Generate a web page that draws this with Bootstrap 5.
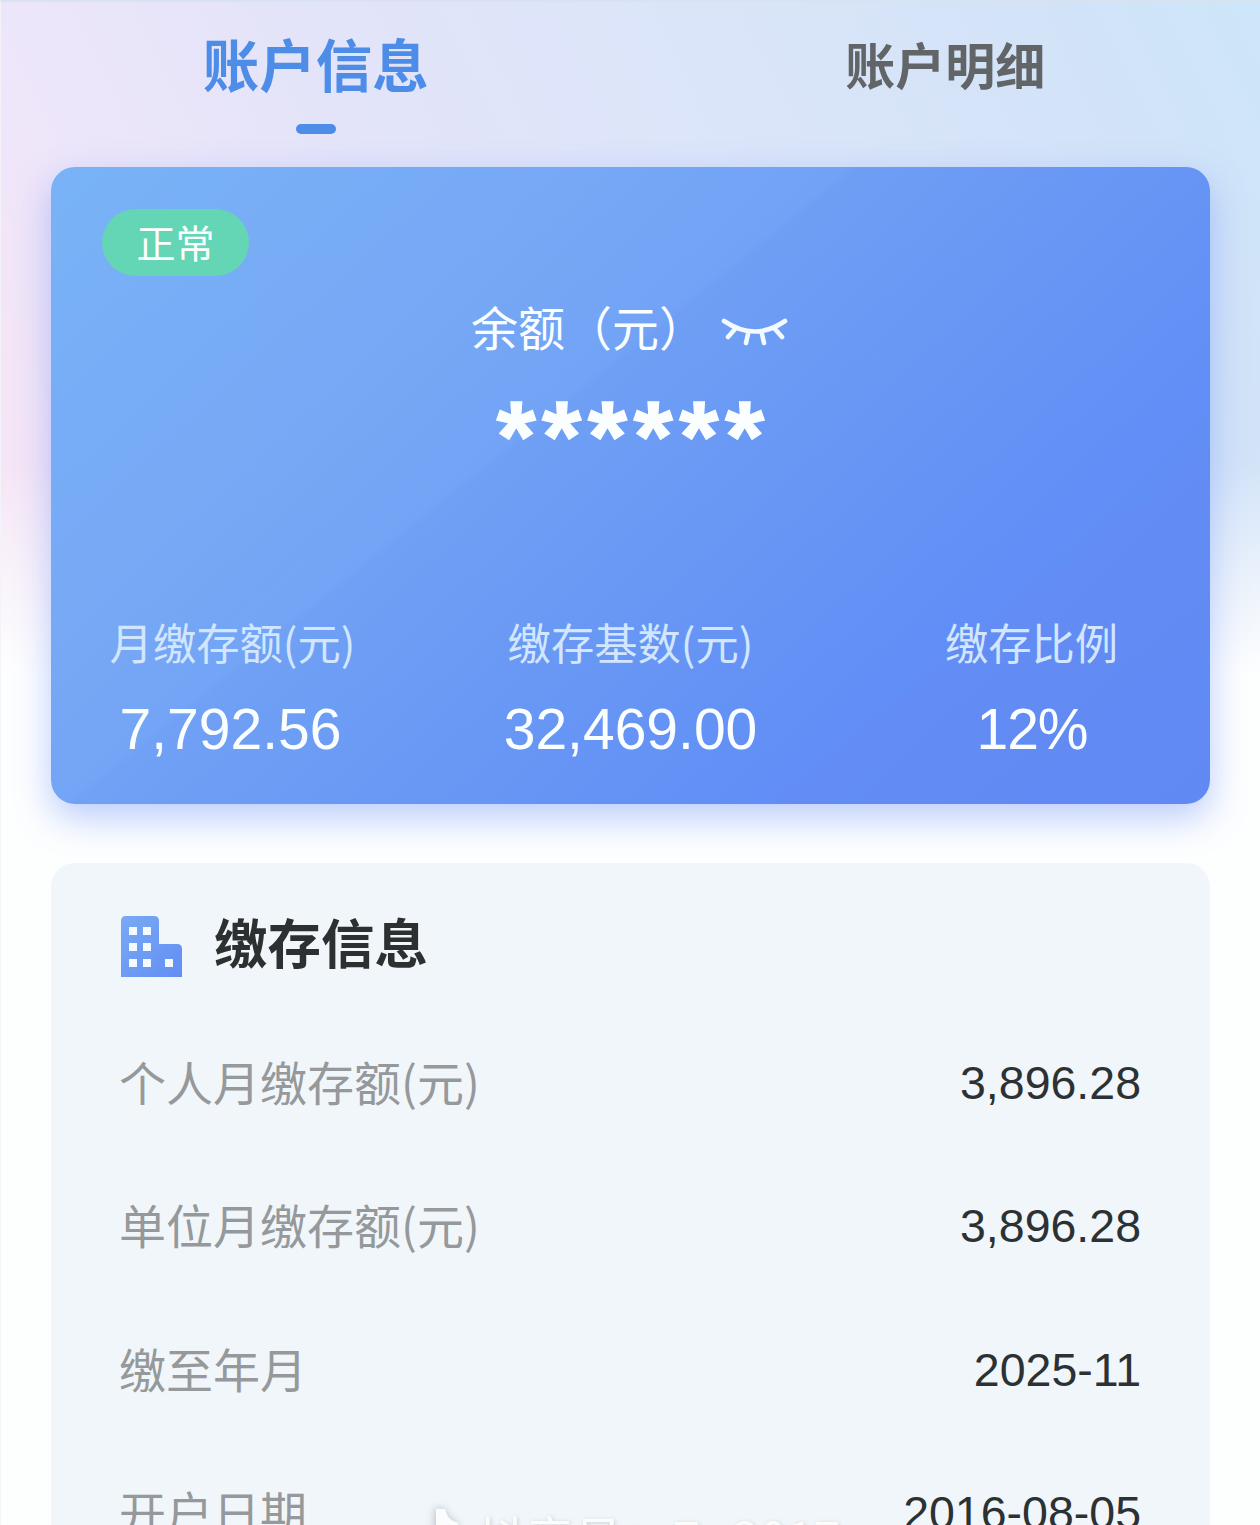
<!DOCTYPE html>
<html lang="zh-CN">
<head>
<meta charset="utf-8">
<meta name="viewport" content="width=device-width, initial-scale=1">
<title>账户信息</title>
<link href="https://cdn.jsdelivr.net/npm/bootstrap@5.3.0/dist/css/bootstrap.min.css" rel="stylesheet">
<style>
  body { font-family: "Liberation Sans", "Noto Sans CJK SC", sans-serif; background: #fdfefe; }
  .screen {
    height: 1525px; border-top: 2px solid #d9e2f0; border-left: 1px solid #f3f3f9;
    background:
      linear-gradient(180deg, rgba(253,254,254,0) 0, rgba(253,254,254,0) 460px, #fdfefe 670px),
      linear-gradient(64deg, #f5e5f6 500px, #ede6fa 667px, #e4e4f9 900px, #dce5f9 1230px, #d2e3f8 1620px, #cde6f9 1800px);
  }
  .tabs { height: 165px; }
  .tab-item { font-weight: 700; font-size: 50px; line-height: 60px; color: #626567; padding-top: 36px; }
  .tab-item.active { font-size: 56.5px; color: #4d8de8; }
  .tab-bar { width: 40px; height: 10px; border-radius: 5px; background: #4d8de8; margin-top: 26px; }
  .panel { margin-left: 50px; width: 1159px; border-radius: 24px; }
  .balance {
    height: 637px; padding-top: 42px; color: #fbfeff;
    background:
      linear-gradient(141deg, transparent 77.3%, rgba(115,125,230,.1) 77.5%, rgba(105,125,235,.1) 100%),
      linear-gradient(141deg, rgba(125,175,250,.05) 0, rgba(130,180,250,.16) 41%, transparent 41.6%),
      linear-gradient(137deg, #79b3f6 0, #75a7f5 28%, #6b9bf4 50%, #618ff6 74%, #5f8bf4 100%);
    box-shadow: 0 14px 36px rgba(95,135,250,.42);
  }
  .status { width: 147px; height: 67px; margin-left: 51px; background: #64d5b5; font-size: 39px; line-height: 71px; }
  .caption { font-size: 47px; line-height: 60px; margin-top: 24px; }
  .caption svg { margin: 4px 1px 0 15px; }
  .masked { font-size: 101px; font-weight: 700; line-height: 100px; height: 100px; margin-top: 26px; letter-spacing: 6.4px; padding-left: 6px; -webkit-text-stroke: 1.3px #fbfeff; }
  .figures { margin-top: 125px; }
  .fig-side { width: 363px; }
  .fig-last { padding-left: 6px; }
  .fig-label { font-family: "Noto Sans CJK SC", sans-serif; font-size: 43.3px; line-height: 60px; color: #d2e6ff; }
  .fig-value { font-size: 57px; line-height: 70px; margin-top: 23px; margin-left: -4px; }
  .fig-last .fig-value { margin-left: 1px; letter-spacing: -1px; }
  .details { height: 760px; margin-top: 59px; padding: 50px 69px 0 68px; background: #f1f6fa; }
  .details h2 { font-size: 53.5px; font-weight: 700; line-height: 66px; color: #2c3031; margin-left: 31px; }
  .details dl { margin-top: 33px; }
  .line-item { height: 143.5px; font-size: 47px; }
  .line-item dt { font-family: "Noto Sans CJK SC", sans-serif; font-weight: 400; color: #95999b; padding-bottom: 6px; }
  .line-item dd { color: #2c3133; font-size: 46.5px; }
  .watermark { left: 427px; top: 1505px; color: #fbfdfd; font: 48.5px/60px "Noto Sans CJK SC", sans-serif; white-space: pre; text-shadow: 1px 1px 4px rgba(90,100,110,.28); }
  .watermark svg { filter: drop-shadow(-1px 0 4px rgba(90,100,110,.4)); margin: 2px 11px 0 4px; }
</style>
</head>
<body>
<main class="screen position-relative overflow-hidden">
  <nav class="tabs d-flex text-center">
    <div class="tab-item active w-50 d-flex flex-column align-items-center">账户信息<span class="tab-bar"></span></div>
    <div class="tab-item w-50">账户明细</div>
  </nav>
  <section class="panel balance">
    <div class="status rounded-pill text-center">正常</div>
    <div class="caption d-flex justify-content-center align-items-center">余额（元）
      <svg width="68" height="32" viewBox="0 0 68 32" fill="none" stroke="#f2faff" stroke-width="4.6" stroke-linecap="round"><path d="M3 5Q34 26 64 5M14 13L7 21M27 18L25 27M41 18L43 27M54 13L61 21"/></svg>
    </div>
    <div class="masked text-center">******</div>
    <div class="figures d-flex text-center">
      <div class="fig-side"><div class="fig-label">月缴存额(元)</div><div class="fig-value">7,792.56</div></div>
      <div class="flex-grow-1"><div class="fig-label">缴存基数(元)</div><div class="fig-value ms-0">32,469.00</div></div>
      <div class="fig-side fig-last"><div class="fig-label">缴存比例</div><div class="fig-value">12%</div></div>
    </div>
  </section>
  <section class="panel details">
    <div class="d-flex align-items-center">
      <svg width="64" height="64" viewBox="0 0 64 64"><defs><linearGradient id="tower" x2="1" y2="1"><stop stop-color="#7aa9f4"/><stop offset="1" stop-color="#628ef3"/></linearGradient></defs><path fill="url(#tower)" d="M2 63V7q0-5 5-5h28q5 0 5 5v23h18q5 0 5 5v28z"/><path fill="#f1faff" d="M10 13h8v8h-8zM24 13h8v8h-8zM10 29h8v8h-8zM24 29h8v8h-8zM10 45h8v8h-8zM24 45h8v8h-8zM46 45h8v8h-8z"/></svg>
      <h2 class="mb-0">缴存信息</h2>
    </div>
    <dl class="mb-0">
      <div class="line-item d-flex justify-content-between align-items-center"><dt>个人月缴存额(元)</dt><dd class="mb-0">3,896.28</dd></div>
      <div class="line-item d-flex justify-content-between align-items-center"><dt>单位月缴存额(元)</dt><dd class="mb-0">3,896.28</dd></div>
      <div class="line-item d-flex justify-content-between align-items-center"><dt>缴至年月</dt><dd class="mb-0">2025-11</dd></div>
      <div class="line-item d-flex justify-content-between align-items-center"><dt>开户日期</dt><dd class="mb-0">2016-08-05</dd></div>
    </dl>
  </section>
  <div class="watermark position-absolute d-flex align-items-start"><svg width="34" height="44" viewBox="0 0 34 44" fill="#fbfdfd"><path d="M4 0h9q2 11 13 14v9q-7-1-13-5v14q-2 12-13 12v-9q4 0 4-5z"/></svg><span>抖音号：Z   2017</span></div>
</main>
<script src="https://cdn.jsdelivr.net/npm/bootstrap@5.3.0/dist/js/bootstrap.bundle.min.js"></script>
</body>
</html>
